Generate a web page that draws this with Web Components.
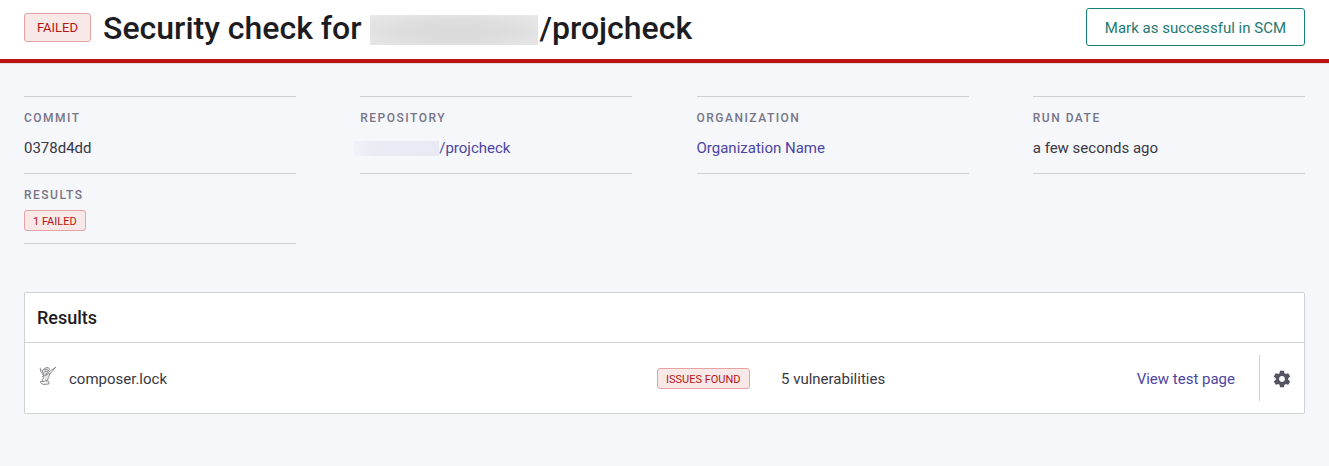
<!DOCTYPE html>
<html lang="en">
<head>
<meta charset="utf-8">
<title>Security check</title>
<style>
body{margin:0;background:#f5f7fb;font-family:Roboto,"Liberation Sans",sans-serif;font-size:15px;color:#393842;min-height:466px}
</style>
</head>
<body>
<check-page></check-page>
<script>
const define = (name, html) => customElements.define(name, class extends HTMLElement {
  constructor() {
    super();
    const t = document.createElement('template');
    t.innerHTML = html;
    this.attachShadow({ mode: 'open' }).append(t.content.cloneNode(true));
  }
});

define('status-badge', `<style>
:host{display:inline-block;box-sizing:border-box;height:21px;padding:0 8px;border:1px solid #e5a2a2;border-radius:3px;background:#f8e8e8;color:#b81414;font-size:11px;line-height:21px;white-space:nowrap;letter-spacing:0}
:host([large]){height:29px;padding:0 12px;font-size:13px;line-height:27px}
</style><slot></slot>`);

define('outline-button', `<style>
:host{display:block;margin-bottom:2px}
button{display:block;box-sizing:border-box;width:219px;height:38px;padding:0;border:1px solid #178079;border-radius:3px;background:#fff;color:#1d7972;font:400 15px/38px Roboto,sans-serif;letter-spacing:.03px;white-space:nowrap}
</style><button><slot></slot></button>`);

define('masked-text', `<style>
:host{display:inline-block;width:168px;height:30px;margin:4px 2px 0 0;background:radial-gradient(ellipse at 50% 55%,#dadada 10%,#dededf 50%,#ebebeb 110%)}
:host([small]){width:85px;height:15px;margin:0;background:linear-gradient(90deg,#f1f2f8,#ebebf4 22%,#e9e9f3)}
</style>`);

define('text-link', `<style>
:host{display:inline-flex;color:#4b45a1}
a{display:inline-flex;align-items:center;color:inherit;text-decoration:none;white-space:nowrap}
</style><a><slot></slot></a>`);

define('page-header', `<style>
:host{display:flex;align-items:center;box-sizing:border-box;height:63px;padding:0 24px 4px;border-bottom:4px solid #bd1313;background:#fff;box-shadow:0 1px 0 #e6dfe4}
h1{display:flex;align-items:center;margin:0 0 0 12px;flex:1;color:#1c1c21;font-size:32px;line-height:48px;font-weight:500;white-space:pre}
</style><slot name="status"></slot><h1><slot></slot></h1><slot name="action"></slot>`);

define('detail-item', `<style>
:host{display:block;box-sizing:border-box;width:272px;height:78px;border-top:1px solid #d0d1d7;border-bottom:1px solid #d0d1d7;padding-top:13px}
:host([compact]){height:70px;border-top:0}
.label{font-size:12px;line-height:16px;font-weight:500;letter-spacing:1.5px;color:#777587}
.value{display:flex;align-items:center;height:24px;margin-top:10px}
:host([compact]) .value{height:21px;margin-top:7px}
</style><div class="label"><slot name="label"></slot></div><div class="value"><slot></slot></div>`);

define('detail-grid', `<style>
:host{display:grid;grid-template-columns:repeat(4,1fr);column-gap:64px;padding:33px 24px 0}
</style><slot></slot>`);

define('composer-icon', `<style>:host{display:block;width:18px;height:20px}svg{display:block}</style>
<svg width="18" height="20" viewBox="0 0 18 20" fill="none" stroke="#6e6f73" stroke-width=".75" stroke-linecap="round" stroke-linejoin="round">
<path d="M2.5 4.5 6 2l4 .2.8 2.8-3 4.2 2.6-1.4-2.4 7-3 .2.8-4.4-1.6-2z" fill="#e3e3e4" stroke="none"/>
<path d="M1.2 2.2 1.8 5.6l2 3M2.8 4l1.8 3.7M3.7 4.1 6.2 2l3-.6 1.5 1.7-1.9 2.1-3 .6M5.5 3.8l2.8-.4"/>
<path d="m16.5 1.4-5.2 3.5-4.6 3.4-3.4 2.4M16.5 1.4 12.2 6.6 6.5 9.4M11.1 7.5l-1.5 3.8-1.3 3.2M4.1 8.6l.9 2.5-1.6 2.6.2 1.5"/>
<path d="m2.1 15.3 3.2.2 1.5-.8 2.9.6.2 2.7-5.7.5-2.3-1.5z" fill="#f1f1f1"/>
</svg>`);

define('settings-icon', `<style>:host{display:block;width:20px;height:20px}svg{display:block}</style>
<svg width="20" height="20" viewBox="0 0 24 24" fill="#555463"><path d="M19.43 12.98c.04-.32.07-.64.07-.98s-.03-.66-.07-.98l2.11-1.65c.19-.15.24-.42.12-.64l-2-3.46c-.12-.22-.39-.3-.61-.22l-2.49 1c-.52-.4-1.08-.73-1.69-.98l-.38-2.65A.488.488 0 0 0 14 2h-4c-.25 0-.46.18-.49.42l-.38 2.65c-.61.25-1.17.59-1.69.98l-2.49-1c-.23-.09-.49 0-.61.22l-2 3.46c-.13.22-.07.49.12.64l2.11 1.65c-.04.32-.07.65-.07.98s.03.66.07.98l-2.11 1.65c-.19.15-.24.42-.12.64l2 3.46c.12.22.39.3.61.22l2.49-1c.52.4 1.08.73 1.69.98l.38 2.65c.03.24.24.42.49.42h4c.25 0 .46-.18.49-.42l.38-2.65c.61-.25 1.17-.59 1.69-.98l2.49 1c.23.09.49 0 .61-.22l2-3.46c.12-.22.07-.49-.12-.64l-2.11-1.65zM12 15.5c-1.93 0-3.5-1.57-3.5-3.5s1.57-3.5 3.5-3.5 3.5 1.57 3.5 3.5-1.57 3.5-3.5 3.5z"/></svg>`);

define('result-row', `<style>
:host{display:grid;grid-template-columns:32px 588px 124px 1fr auto 24px 45px;align-items:center;height:70px;padding-left:12px;white-space:nowrap}
composer-icon{margin:-4px 0 0 2px}
.action{display:flex;align-items:center;justify-content:center;box-sizing:border-box;height:46px;border-left:1px solid #d0d1d7;grid-column:7}
.action settings-icon{margin-top:2px}
.t{padding-top:1px}
</style><composer-icon></composer-icon><span class="t"><slot name="file"></slot></span><span><slot name="status"></slot></span><span class="t"><slot></slot></span><span class="t"><slot name="link"></slot></span><div class="action"><settings-icon></settings-icon></div>`);

define('results-panel', `<style>
:host{display:block;box-sizing:border-box;height:122px;margin:48px 24px 0;background:#fff;border:1px solid #d0d1d7;border-radius:2px}
h2{box-sizing:border-box;height:50px;margin:0;padding-left:12px;border-bottom:1px solid #d0d1d7;color:#1c1c21;font-size:18px;line-height:50px;font-weight:500}
</style><h2><slot name="heading"></slot></h2><slot></slot>`);

define('check-page', `<style>
:host{display:block}
.row-badge{display:block;width:max-content}
</style>
<page-header>
<status-badge slot="status" large>FAILED</status-badge>Security check for <masked-text></masked-text>/projcheck<outline-button slot="action">Mark as successful in SCM</outline-button>
</page-header>
<detail-grid>
<detail-item><span slot="label">COMMIT</span>0378d4dd</detail-item>
<detail-item><span slot="label">REPOSITORY</span><text-link style="margin-left:-6px"><masked-text small></masked-text>/projcheck</text-link></detail-item>
<detail-item><span slot="label">ORGANIZATION</span><text-link>Organization Name</text-link></detail-item>
<detail-item><span slot="label">RUN DATE</span>a few seconds ago</detail-item>
<detail-item compact><span slot="label">RESULTS</span><status-badge>1 FAILED</status-badge></detail-item>
</detail-grid>
<results-panel><span slot="heading">Results</span>
<result-row><span slot="file">composer.lock</span><status-badge slot="status" class="row-badge">ISSUES FOUND</status-badge>5 vulnerabilities<text-link slot="link">View test page</text-link></result-row>
</results-panel>`);
</script>
</body>
</html>
